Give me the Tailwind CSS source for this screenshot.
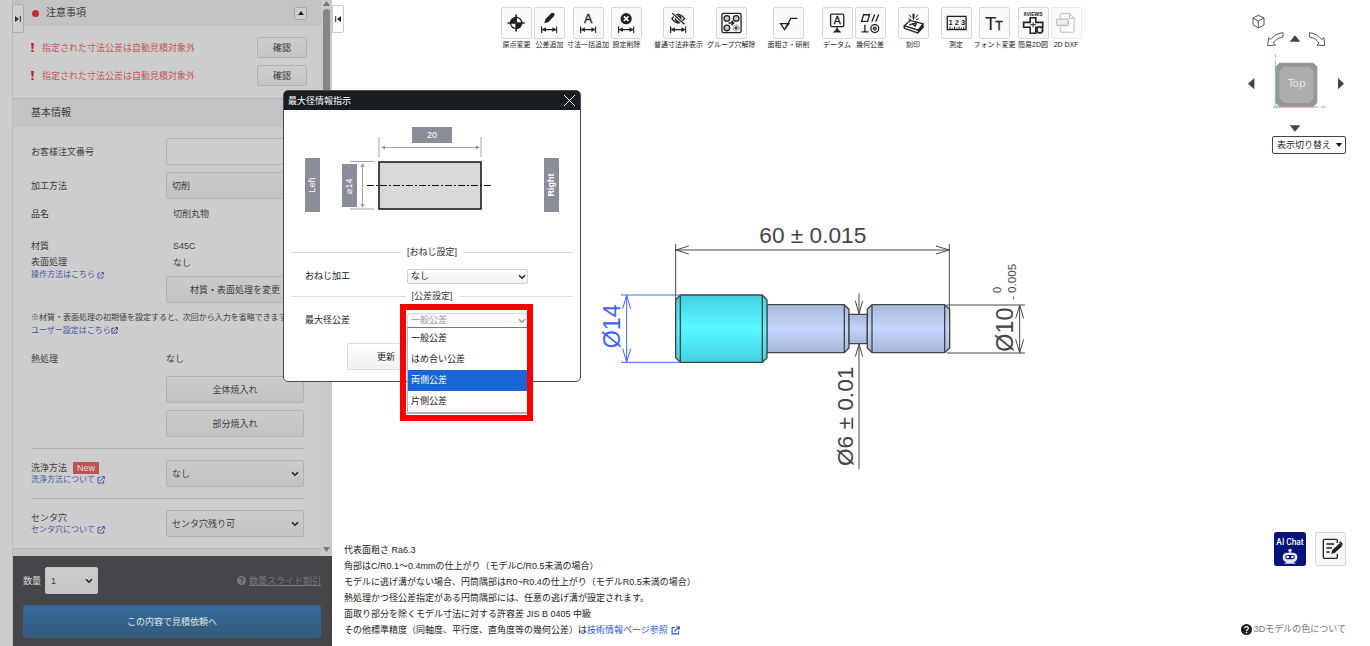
<!DOCTYPE html>
<html lang="ja">
<head>
<meta charset="utf-8">
<meta name="viewport" content="width=device-width, initial-scale=1">
<title>最大径情報指示</title>
<script src="https://cdn.jsdelivr.net/npm/@tailwindcss/browser@4"></script>
</head>
<body class="relative flex h-screen overflow-hidden bg-white font-['Liberation_Sans','Noto_Sans_CJK_JP',sans-serif] text-[9px] leading-[16px] text-[#222]">

<!-- Shared symbols -->
<svg class="hidden" aria-hidden="true">
  <symbol id="chev" viewBox="0 0 8 6"><path d="M1 1.2 4 4.2 7 1.2" fill="none" stroke="currentColor" stroke-width="1.6"/></symbol>
  <symbol id="ext" viewBox="0 0 24 24"><path d="M11 4H3v17h17v-8M14 2h8v8M22 2 9 15" fill="none" stroke="currentColor" stroke-width="3"/></symbol>
  <symbol id="help" viewBox="0 0 24 24"><circle cx="12" cy="12" r="12" fill="currentColor"/><path d="M8 9.5C8 4.5 16 4.500 16 9.500c0 3-4 3-4 5.500M12 17v3" fill="none" stroke="var(--mark,#fff)" stroke-width="3"/></symbol>
  <symbol id="span" viewBox="0 0 50 20"><path d="M2 0v20M48 0v20M5 10h40" fill="none" stroke="#222" stroke-width="4"/><path d="M3 10 15 3v14zM47 10 35 3v14z" fill="#222"/></symbol>
</svg>

<!-- Settings sidebar -->
<aside class="relative flex w-[332px] shrink-0 bg-[#cdcdcd] pl-3 text-[#3d3d40]">
  <button aria-label="パネルを開く" class="absolute left-3 top-1 z-10 flex h-[29px] w-3 items-center justify-center rounded-[2px] border border-[#aaabaf] bg-[#cfcfcf]">
    <svg class="h-[8px] w-[6px]" viewBox="0 0 6 8"><path d="M0 1v6l4-3z" fill="#333"/><path d="M5.300 1v6" stroke="#333"/></svg>
  </button>
  <div class="flex min-w-0 flex-1 flex-col border-l border-[#b9babd]">
    <div class="flex min-h-0 flex-1 bg-[#c3c3c6]">
      <div class="min-w-0 flex-1 overflow-hidden">
        <div class="flex h-[26px] items-center bg-[#c3c3c6] pl-[19px] pr-[14px] text-[10px]">
          <span class="size-[7px] rounded-full bg-[#c8292e]"></span>
          <h2 class="ml-[7px] flex-1">注意事項</h2>
          <button aria-label="閉じる" class="flex size-[13px] items-center justify-center rounded-[2px] border border-[#a5a6aa] bg-[#cdcdcd]"><svg class="h-1 w-[6px]" viewBox="0 0 6 4"><path d="M3 0 6 4H0z" fill="#222"/></svg></button>
        </div>
        <div class="flex flex-col gap-[7px] border-b border-[#b2b3b7] bg-[#cdcdcd] pb-3 pl-[18px] pr-[14px] pt-[11px]">
          <div class="flex h-[21px] items-center text-[#c3575a]"><svg class="mr-2 h-[9px] w-[3px]" viewBox="0 0 3 9"><path d="M0 0h3L2.300 6H.7zM.4 7h2.200v2H.4z" fill="#c8292e"/></svg><span class="flex-1">指定された寸法公差は自動見積対象外</span><button class="h-[21px] w-[50px] rounded-[2px] border border-[#b0b1b5] bg-linear-to-b from-[#cdcdcd] to-[#c4c4c4] leading-[18px] text-[#333]">確認</button></div>
          <div class="flex h-[21px] items-center text-[#c3575a]"><svg class="mr-2 h-[9px] w-[3px]" viewBox="0 0 3 9"><path d="M0 0h3L2.300 6H.7zM.4 7h2.200v2H.4z" fill="#c8292e"/></svg><span class="flex-1">指定された寸法公差は自動見積対象外</span><button class="h-[21px] w-[50px] rounded-[2px] border border-[#b0b1b5] bg-linear-to-b from-[#cdcdcd] to-[#c4c4c4] leading-[18px] text-[#333]">確認</button></div>
        </div>
        <h2 class="h-7 bg-[#c3c3c6] pl-[18px] text-[10px] leading-[28px]">基本情報</h2>
        <div class="border-b border-[#b2b3b7] bg-[#cdcdcd] pb-[11px] pl-[18px] pr-[17px] pt-[11px]">
          <div class="mb-[7px] flex h-[27px] items-center">
            <label for="order" class="w-[135px]">お客様注文番号</label>
            <input id="order" type="text" class="h-[27px] min-w-0 flex-1 rounded-[2px] border border-[#b0b1b5] bg-[#cdcdcd] px-[5px]">
          </div>
          <div class="flex h-[27px] items-center">
            <label for="method" class="w-[135px]">加工方法</label>
            <select id="method" class="h-[27px] min-w-0 flex-1 appearance-none rounded-[2px] border border-[#b0b1b5] bg-linear-to-b from-[#cbcbcb] to-[#c2c2c2] px-[5px]"><option>切削</option></select>
          </div>
          <div class="flex h-[30px] items-center"><span class="w-[135px]">品名</span><span class="pl-[7px]">切削丸物</span></div>
          <div class="mt-[9px] flex">
            <div class="w-[135px]">
              <p>材質</p><p>表面処理</p>
              <a href="#" class="flex items-center gap-[2px] text-[8px] leading-[10px] text-[#4558a0]">操作方法はこちら<svg class="size-[7px]"><use href="#ext"/></svg></a>
            </div>
            <div class="flex-1">
              <p class="pl-[7px]">S45C</p><p class="mb-1 pl-[7px] leading-[18px]">なし</p>
              <button class="h-[27px] w-full whitespace-nowrap rounded-[2px] border border-[#b0b1b5] bg-linear-to-b from-[#cbcbcb] to-[#c2c2c2]">材質・表面処理を変更</button>
            </div>
          </div>
          <p class="mt-[9px] whitespace-nowrap text-[8px] leading-[12px]">※材質・表面処理の初期値を設定すると、次回から入力を省略できます。</p>
          <a href="#" class="flex items-center text-[8px] leading-[13px] text-[#4558a0]">ユーザー設定はこちら<svg class="size-[7px] text-[#263a80]"><use href="#ext"/></svg></a>
          <div class="mt-[14px] flex">
            <span class="w-[135px]">熱処理</span>
            <div class="flex flex-1 flex-col gap-[7px]">
              <p class="mb-[2px]">なし</p>
              <button class="h-[27px] rounded-[2px] border border-[#b0b1b5] bg-linear-to-b from-[#cbcbcb] to-[#c2c2c2]">全体焼入れ</button>
              <button class="h-[27px] rounded-[2px] border border-[#b0b1b5] bg-linear-to-b from-[#cbcbcb] to-[#c2c2c2]">部分焼入れ</button>
            </div>
          </div>
          <hr class="my-[11px] border-[#aeafb2]">
          <div class="flex h-[27px]">
            <div class="w-[135px] pt-[1px] leading-[14px]">
              <label for="wash" class="flex items-center gap-[6px]">洗浄方法<span class="bg-[#bd5556] px-1 leading-[12px] text-[#e2dcdc]">New</span></label>
              <a href="#" class="flex items-center gap-[2px] text-[8px] leading-[10px] text-[#4558a0]">洗浄方法について<svg class="size-2"><use href="#ext"/></svg></a>
            </div>
            <div class="relative flex-1"><select id="wash" class="h-[27px] w-full appearance-none rounded-[2px] border border-[#b0b1b5] bg-linear-to-b from-[#cbcbcb] to-[#c2c2c2] px-[5px]"><option>なし</option></select><svg class="pointer-events-none absolute right-[5px] top-[11px] h-[6px] w-2 text-[#222]"><use href="#chev"/></svg></div>
          </div>
          <hr class="my-[11px] border-[#aeafb2]">
          <div class="flex h-[27px]">
            <div class="w-[135px] pt-[1px] leading-[14px]">
              <label for="center" class="block">センタ穴</label>
              <a href="#" class="flex items-center gap-[2px] text-[8px] leading-[10px] text-[#4558a0]">センタ穴について<svg class="size-2"><use href="#ext"/></svg></a>
            </div>
            <div class="relative flex-1"><select id="center" class="h-[27px] w-full appearance-none rounded-[2px] border border-[#b0b1b5] bg-linear-to-b from-[#cbcbcb] to-[#c2c2c2] px-[5px]"><option>センタ穴残り可</option></select><svg class="pointer-events-none absolute right-[5px] top-[11px] h-[6px] w-2 text-[#222]"><use href="#chev"/></svg></div>
          </div>
        </div>
      </div>
      <!-- Scrollbar -->
      <div class="flex w-[11px] flex-col items-center bg-[#c9c9c9] py-[1px]">
        <svg class="h-[5px] w-[7px]" viewBox="0 0 7 5"><path d="M3.500 0 7 5H0z" fill="#77777a"/></svg>
        <div class="mt-[3px] h-[280px] w-[7px] rounded-full bg-[#858585]"></div>
        <svg class="mb-[3px] mt-auto h-[5px] w-[7px]" viewBox="0 0 7 5"><path d="M3.500 5 7 0H0z" fill="#77777a"/></svg>
      </div>
    </div>
    <footer class="flex flex-col gap-[11px] bg-[#454649] pb-2 pl-[10px] pr-[11px] pt-[11px]">
      <div class="flex items-center">
        <label for="qty" class="mr-1 text-[#d6d6d6]">数量</label>
        <div class="relative w-[53px]"><select id="qty" class="h-[27px] w-full appearance-none rounded-[2px] border border-[#c4c4c4] bg-linear-to-b from-[#cecece] to-[#c4c4c4] px-[5px]"><option>1</option></select><svg class="pointer-events-none absolute right-[5px] top-[11px] h-[6px] w-2 text-[#222]"><use href="#chev"/></svg></div>
        <a href="#" class="ml-auto flex items-center gap-[3px] text-[#77787a] [--mark:#454649]"><svg class="size-[9px]"><use href="#help"/></svg><span class="underline">数量スライド割引</span></a>
      </div>
      <button class="h-[33px] rounded-[2px] border border-[#37618b] bg-linear-to-b from-[#346b9d] to-[#345a7a] text-[#dfe3e6]">この内容で見積依頼へ</button>
    </footer>
  </div>
</aside>

<!-- 3D viewer -->
<main class="flex min-w-0 flex-1">
  <div class="flex min-w-0 flex-1 flex-col">
    <div class="flex items-start">
      <button aria-label="パネルを閉じる" class="mt-[5px] flex h-[28px] w-3 shrink-0 items-center justify-center rounded-r-[2px] border border-[#c9c9cc] bg-white"><svg class="h-[8px] w-[6px]" viewBox="0 0 6 8"><path d="M6 1v6L2 4z" fill="#222"/><path d="M.7 1v6" stroke="#222"/></svg></button>
      <div class="ml-[157px] mt-[7px] flex gap-3 whitespace-nowrap text-[7px] leading-[10px] [&_button]:flex [&_button]:flex-col [&_button]:items-center [&_svg]:h-8 [&_svg]:w-[31px] [&_svg]:rounded-[2px] [&_svg]:border [&_svg]:border-[#d6d7db] [&_svg]:bg-[#fafafa] [&_svg]:mb-[1px]">
        <div class="flex gap-[2px]">
          <button><svg viewBox="0 0 88 90"><circle cx="43" cy="45" r="17" fill="#fff" stroke="#222" stroke-width="4"/><path d="M43 45V28A17 17 0 0 0 26 45zM43 45v17a17 17 0 0 0 17-17z" fill="#222"/><path d="M43 19v52M17 45h52" stroke="#222" stroke-width="5"/></svg>原点変更</button>
          <button><svg viewBox="0 0 88 90"><path d="M28 46 32 33 50 15q5-3 8 1t0 8L41 42z" fill="#222"/><use href="#span" x="18" y="55" width="50" height="20"/></svg>公差追加</button>
          <button><svg viewBox="0 0 88 90"><text x="43" y="45" text-anchor="middle" font-size="38" fill="#222" stroke="#222">A</text><use href="#span" x="18" y="55" width="50" height="20"/></svg>寸法一括追加</button>
          <button><svg viewBox="0 0 88 90"><circle cx="43" cy="32" r="17" fill="#222"/><path d="m36 25 14 14M50 25 36 39" stroke="#fff" stroke-width="5"/><use href="#span" x="18" y="55" width="50" height="20"/></svg>設定削除</button>
        </div>
        <div class="flex gap-1">
          <button><svg viewBox="0 0 88 90"><path d="M24 32q19-26 38 0-19 26-38 0z" fill="none" stroke="#222" stroke-width="4"/><circle cx="43" cy="32" r="8" fill="none" stroke="#222" stroke-width="5"/><path d="m27 17 33 31" stroke="#fafafa" stroke-width="9"/><path d="m25 15 37 34" stroke="#222" stroke-width="4"/><use href="#span" x="18" y="55" width="50" height="20"/></svg>普通寸法非表示</button>
          <button><svg viewBox="0 0 88 90"><rect x="15" y="16" width="58" height="58" rx="5" fill="none" stroke="#222" stroke-width="4"/><g fill="#ccc" stroke="#222" stroke-width="4"><circle cx="30" cy="31" r="8.500"/><circle cx="58" cy="31" r="8.500"/><circle cx="30" cy="60" r="8.500"/></g><circle cx="58" cy="60" r="9" fill="none" stroke="#444" stroke-width="3" stroke-dasharray="3 2"/><circle cx="58" cy="60" r="5" fill="#333"/><path d="M35 45h14M44 38l7 7-7 7" fill="none" stroke="#222" stroke-width="4"/></svg>グループ穴解除</button>
        </div>
        <button><svg viewBox="0 0 88 90"><path d="M17 47h28L32 65 20 47M32 65 51 31h20" fill="none" stroke="#222" stroke-width="4"/></svg>面粗さ・研削</button>
        <div class="flex gap-[2px]">
          <button><svg viewBox="0 0 88 90"><rect x="23" y="18" width="40" height="38" rx="4" fill="none" stroke="#222" stroke-width="4"/><text x="43" y="49" text-anchor="middle" font-size="32" fill="#222" stroke="#222">A</text><path d="M43 56v16" stroke="#222" stroke-width="4"/><path d="M30 74h26L43 61z" fill="#222"/></svg>データム</button>
          <button><svg viewBox="0 0 88 90"><path d="M23 20h18l-6 20H17zM57 19l-9 22M69 19l-9 22M27 50v22M17 72h21" fill="none" stroke="#222" stroke-width="4"/><circle cx="57" cy="62" r="12" fill="none" stroke="#222" stroke-width="4"/><circle cx="57" cy="62" r="5" fill="#777" stroke="#222" stroke-width="3"/></svg>幾何公差</button>
        </div>
        <button><svg viewBox="0 0 88 90"><path d="M16 53 34 37 73 48 58 67zM16 53v8l41 14 16-17V48" fill="#fff" stroke="#222" stroke-width="4"/><path d="M57 67 73 50v8L57 75z" fill="#222"/><path d="m31 51 22-7-5 13M39 47l12 7" fill="none" stroke="#222" stroke-width="4"/><path d="M41 17h6v12l-3 8-3-8z" fill="#222"/><path d="M31 20l6 9M57 20l-6 9M28 32l8 3M60 32l-8 3" stroke="#222" stroke-width="3"/></svg>刻印</button>
        <div class="flex gap-[2px]">
          <button><svg viewBox="0 0 88 90"><rect x="16" y="25" width="57" height="40" fill="none" stroke="#222" stroke-width="4"/><text x="45" y="50" text-anchor="middle" font-size="23" font-weight="700" fill="#222">1 2 3</text><path d="M24 65v-9M31 65v-6M38 65v-9M45 65v-6M52 65v-9M59 65v-6M66 65v-9" stroke="#222" stroke-width="3"/></svg>測定</button>
          <button><svg viewBox="0 0 88 90"><text x="15" y="67" font-size="56" fill="#222">T</text><text x="46" y="67" font-size="38" fill="#222" stroke="#222">T</text></svg>フォント変更</button>
          <button><svg viewBox="0 0 88 90"><text x="43" y="23" text-anchor="middle" font-size="15" font-weight="700" fill="#222">6VIEWS</text><path d="M34 29h17v14h21v15H51v18H34V58H14V43h20z" fill="none" stroke="#222" stroke-width="5"/><path d="M34 50h17M43 43v15" fill="none" stroke="#222" stroke-width="3"/><circle cx="63" cy="66" r="9" fill="#fff" stroke="#222" stroke-width="5"/></svg>簡易2D図</button>
          <button disabled><svg class="opacity-50" viewBox="0 0 88 90"><path d="M25 32V20q0-4 4-4h24l14 15v38q0 4-4 4H29q-4 0-4-4V56M53 16v15h14" fill="none" stroke="#777" stroke-width="3"/><rect x="14" y="33" width="36" height="20" rx="3" fill="#bbb" stroke="#777" stroke-width="3"/><text x="32" y="49" text-anchor="middle" font-size="15" font-weight="700" fill="#fff">DXF</text></svg>2D DXF</button>
        </div>
      </div>
    </div>

    <!-- Dimensioned shaft, drawn three units to the pixel -->
    <div class="min-h-0 flex-1 pl-[258px] pt-[160px]">
      <svg class="h-[270px] w-[450px]" viewBox="0 0 1350 810" role="img" aria-label="軸の寸法図" font-family="Liberation Sans, sans-serif">
        <defs>
          <linearGradient id="cy" x1="0" y1="0" x2="0" y2="1"><stop offset="0" stop-color="#43d0e0"/><stop offset=".5" stop-color="#58f8ff"/><stop offset="1" stop-color="#43d0e0"/></linearGradient>
          <linearGradient id="bl" x1="0" y1="0" x2="0" y2="1"><stop offset="0" stop-color="#a7badb"/><stop offset=".5" stop-color="#c4d7fc"/><stop offset="1" stop-color="#a5b7d7"/></linearGradient>
        </defs>
        <g stroke="#444" stroke-width="4">
          <path d="M530 284h233l14 14v116l-14 14H530z" fill="url(#bl)"/><path d="M763 284v144"/>
          <path d="M777 313h55v88h-55z" fill="url(#bl)"/>
          <path d="M846 284h218l15 14v116l-15 14H846l-14-14V298z" fill="url(#bl)"/><path d="M846 284v144M1064 284v144"/>
          <path d="M271 255h246l14 14v174l-14 14H271l-14-14V269z" fill="url(#cy)"/><path d="M271 255v202M517 255v202"/>
        </g>
        <g fill="none" stroke="#484848" stroke-width="3">
          <path d="M257 102v170M1078 102v196M258 120h820M296 108l-38 12 38 12M1038 108l40 12-40 12"/>
          <path d="M807 250v62M796 272l11 40 11-40M807 402v376M796 440l11-38 11 38"/>
          <path d="M1070 285h235M1070 429h235M1289 286v142M1277 325l12-39 12 39M1277 388l12 40 12-40"/>
        </g>
        <path d="M93 255h178M93 457h178M110 256v200M98 296l12-40 12 40M98 416l12 40 12-40" fill="none" stroke="#4464f0" stroke-width="3"/>
        <g fill="#444">
          <text x="508" y="100" font-size="68">60 ± 0.015</text>
          <text transform="translate(790 768) rotate(-90)" font-size="68">Ø6 ± 0.01</text>
          <text transform="translate(1270 425) rotate(-90)" font-size="70">Ø10</text>
          <text transform="translate(1232 249) rotate(-90)" font-size="33">0</text>
          <text transform="translate(1279 270) rotate(-90)" font-size="35">- 0.005</text>
        </g>
        <text transform="translate(91 415) rotate(-90)" font-size="70" fill="#4464f0">Ø14</text>
      </svg>
    </div>

    <div class="whitespace-nowrap pb-2 pl-3">
      <p>代表面粗さ Ra6.3</p>
      <p>角部はC/R0.1～0.4mmの仕上がり（モデルC/R0.5未満の場合）</p>
      <p>モデルに逃げ溝がない場合、円筒隅部はR0~R0.4の仕上がり（モデルR0.5未満の場合）</p>
      <p>熱処理かつ径公差指定がある円筒隅部には、任意の逃げ溝が設定されます。</p>
      <p>面取り部分を除くモデル寸法に対する許容差 JIS B 0405 中級</p>
      <p>その他標準精度（同軸度、平行度、直角度等の幾何公差）は<a href="#" class="text-[#2f55e0]">技術情報ページ参照<svg class="ml-[3px] inline size-[9px]"><use href="#ext"/></svg></a></p>
    </div>
  </div>

  <!-- View cube and help -->
  <div class="flex w-[150px] shrink-0 flex-col items-end">
    <svg class="h-[135px] w-[150px]" viewBox="0 0 450 405" role="img" aria-label="ビューキューブ">
      <path d="m115 46 17 8v21l-17 9-16-9V54zM99 54l16 9 17-9M115 63v21" fill="none" stroke="#555" stroke-width="3"/>
      <path d="M189 98v13q-18 2-29 18l7 6-24 2 3-24 6 6q14-19 37-21zM268 98v13q18 2 29 18l-6 6 23 2-2-24-7 6q-14-19-37-21z" fill="#fff" stroke="#555" stroke-width="3"/>
      <path d="m225 106 16 19h-32zM225 395l16-19h-32zM84 251l19-17v34zM372 251l-18-17v34z" fill="#444"/>
      <path d="M166 162v10M166 182v138" stroke="#6fd68a" stroke-width="3"/>
      <path d="M166 321h126M305 321h11" stroke="#ee7777" stroke-width="3"/><path d="M158 321h14" stroke="#7db8ee" stroke-width="3"/>
      <path d="M178 188h102l12 12v108l-12 12H178l-11-12V200z" fill="#969696"/>
      <path d="M192 200h75l14 14v80l-14 15h-75l-14-15v-80z" fill="#adadad"/>
      <text x="230" y="262" text-anchor="middle" font-size="32" font-family="DejaVu Sans, sans-serif" fill="#e2e2e2">Top</text>
    </svg>
    <button class="mr-6 mt-[1px] flex h-[18px] w-[74px] items-center justify-between whitespace-nowrap rounded-[2px] border border-[#444] bg-white pl-1 pr-[3px]">表示切り替え<svg class="h-1 w-[6px]" viewBox="0 0 6 4"><path d="M0 0h6L3 4z" fill="#111"/></svg></button>
    <div class="mr-6 mt-auto flex gap-[9px]">
      <button aria-label="AI Chat"><svg class="h-[34px] w-8" viewBox="0 0 96 102"><rect width="96" height="102" rx="8" fill="#07127a"/><text x="48" y="39" text-anchor="middle" font-size="25" font-family="Roboto, sans-serif" font-weight="500" fill="#fff">AI Chat</text><g fill="#dfe6f5"><circle cx="48" cy="55" r="5"/><path d="M46 57h4v8h-4zM38 62h20q12 1 12 14t-12 14H38q-12-1-12-14t12-14zM32 92q16-5 32 0v3H32z"/></g><rect x="34" y="69" width="28" height="13" rx="6" fill="#07127a"/><circle cx="41" cy="75" r="4" fill="#fff"/><circle cx="55" cy="75" r="4" fill="#fff"/></svg></button>
      <button aria-label="メモ" class="rounded-[2px] border border-[#d6d7db] bg-[#f8f8f8]"><svg class="h-8 w-[29px]" viewBox="0 0 87 96"><path d="M64 30V22q0-3-3-3H25q-3 0-3 3v50q0 4 3 4h36q3 0 3-4V62M31 33h23M31 45h17M31 57h10" fill="none" stroke="#222" stroke-width="4"/><path d="m45 63 4-12 22-20 8 8-22 20zM69 28l4-3 8 8-3 4z" fill="#222"/></svg></button>
    </div>
    <a href="#" class="mb-[9px] mr-6 mt-[55px] flex items-center gap-[2px] whitespace-nowrap text-[#77787a]"><svg class="size-[11px] text-[#1a1e22]"><use href="#help"/></svg>3Dモデルの色について</a>
  </div>
</main>

<!-- Dialog over the page -->
<section role="dialog" aria-labelledby="dlg" class="absolute left-[283px] top-[90px] z-20 w-[298px] rounded-[5px] border border-[#4a4b4e] bg-white pb-[11px]">
  <header class="flex h-[19px] items-center justify-between rounded-t-[3px] bg-[#1a1e22] pl-1 pr-[5px] text-white">
    <h1 id="dlg">最大径情報指示</h1>
    <button aria-label="閉じる"><svg class="size-[11px]" viewBox="0 0 11 11"><path d="m0 0 11 11M11 0 0 11" stroke="#fff"/></svg></button>
  </header>
  <svg class="block h-[134px] w-full" viewBox="284 110 296 134" font-size="9" text-anchor="middle" fill="#fff" font-family="Liberation Sans, sans-serif">
    <path d="M412 127h40v16h-40zM305 158h15v54h-15zM342 164h15v43h-15zM544 158h15v54h-15z" fill="#8b8d98"/>
    <text x="432" y="138">20</text>
    <text transform="translate(315 185) rotate(-90)">Left</text>
    <text transform="translate(352 186) rotate(-90)">⌀14</text>
    <text transform="translate(554 185) rotate(-90)" font-weight="700">Right</text>
    <path d="M379 137v20M481 137v20M382 147.500h96M350 161.500h24M350 209h24M362.500 165v42" stroke="#a6a6a6" fill="none"/>
    <path d="m381 147.500 4-2v4zM480 147.500l-4-2v4zM362.500 163l-2 4h4zM362.500 208l-2-4h4z" fill="#999"/>
    <rect x="379" y="162" width="102" height="47" fill="#d9d9d9" stroke="#111" stroke-width="1.500"/>
    <path d="M367 185.500h126" stroke="#111" stroke-dasharray="7 2 2 2"/>
  </svg>
  <div class="flex h-4 items-center gap-[6px] px-[7px] text-[#333]"><span class="h-px flex-1 bg-[#dedfe3]"></span>[おねじ設定]<span class="h-px flex-1 bg-[#dedfe3]"></span></div>
  <div class="flex h-7 items-center pl-[21px] pr-[52px] pt-[4px]">
    <label for="thread" class="w-[102px]">おねじ加工</label>
    <div class="relative flex-1"><select id="thread" class="block h-[15px] w-full appearance-none rounded-[2px] border border-[#d0d1d5] bg-linear-to-b from-white to-[#f0f0f0] px-[3px] leading-[13px]"><option>なし</option></select><svg class="pointer-events-none absolute right-[2px] top-[5px] h-[6px] w-2"><use href="#chev"/></svg></div>
  </div>
  <div class="flex h-4 items-center gap-[6px] px-[7px] text-[#333]"><span class="h-px flex-1 bg-[#dedfe3]"></span>[公差設定]<span class="h-px flex-1 bg-[#dedfe3]"></span></div>
  <div class="flex h-8 items-center pl-[21px] pr-[52px]">
    <label for="tol" class="w-[102px]">最大径公差</label>
    <div class="relative flex-1"><select id="tol" class="block h-[15px] w-full appearance-none rounded-[2px] border border-[#d3d9ee] bg-[#fafafc] px-[3px] leading-[13px] text-[#999]"><option>一般公差</option></select><svg class="pointer-events-none absolute right-[2px] top-[5px] h-[6px] w-2 text-[#999]"><use href="#chev"/></svg>
      <ul role="listbox" aria-label="最大径公差" class="absolute inset-x-0 top-[14px] z-10 border border-b-2 border-[#a9b4c4] border-t-[#777] bg-white leading-[21px] [&_li]:px-[3px]">
        <li role="option">一般公差</li>
        <li role="option">はめ合い公差</li>
        <li role="option" aria-selected="true" class="bg-[#1865d5] text-white">両側公差</li>
        <li role="option">片側公差</li>
      </ul>
      <!-- Callout frame round the open list -->
      <span class="pointer-events-none absolute -left-[7px] -right-[5px] -top-[9px] z-20 h-[117px] border-6 border-[#ff0000]"></span>
    </div>
  </div>
  <button class="ml-[63px] mt-[7px] block h-[27px] w-[78px] rounded-[2px] border border-[#d9dadd] bg-linear-to-b from-white to-[#f1f1f1]">更新</button>
</section>
</body>
</html>
